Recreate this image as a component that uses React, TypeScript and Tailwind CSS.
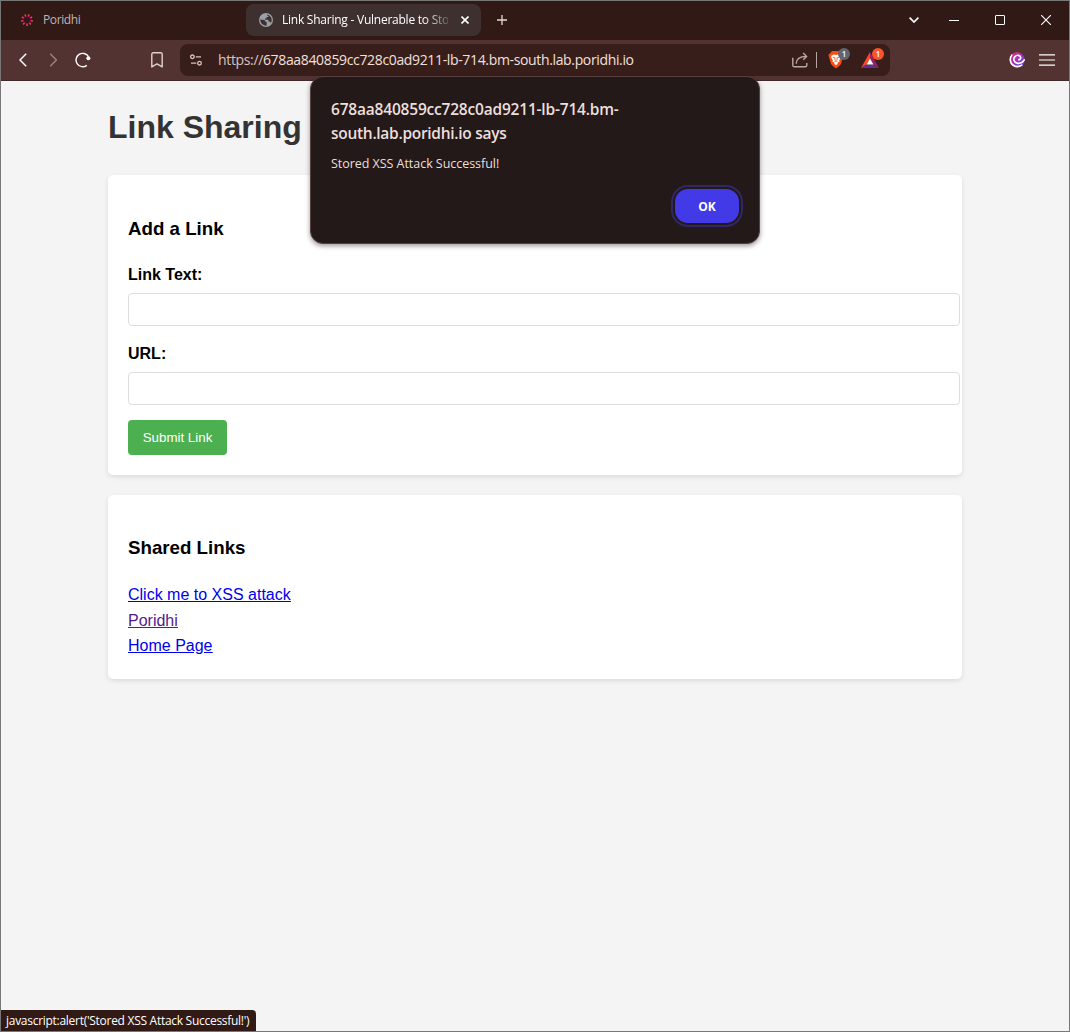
import React from "react";

function PoridhiIcon() {
  const dots = Array.from({ length: 9 }, (_, i) => {
    const a = ((i * 40 + 10) * Math.PI) / 180;
    return { x: Math.cos(a), y: Math.sin(a), i };
  });
  return (
    <svg width="12" height="12" viewBox="0 0 12 12" className="overflow-visible">
      {dots.map((d) => (
        <g key={d.i}>
          <circle cx={6 + d.x * 4.3} cy={6 + d.y * 4.3} r="1.05" fill="#d8146e" />
          <circle cx={6 + d.x * 5.3} cy={6 + d.y * 5.3} r=".75" fill="#f5603c" />
        </g>
      ))}
    </svg>
  );
}

function TabStrip() {
  return (
    <div className="flex h-[39px] shrink-0 items-center bg-[#311a16] pb-px text-[12px]">
      <div className="flex w-[245px] items-center pl-5">
        <PoridhiIcon />
        <span className="ml-[10px] tracking-[-0.4px] text-[#bfb4b1]">Poridhi</span>
      </div>
      <div className="flex h-8 w-[235px] items-center rounded-[8px] bg-[#3d302f] pl-[13px]">
        <svg width="14" height="14" viewBox="0 0 14 14">
          <circle cx="7" cy="7" r="7" fill="#9aa0a6" />
          <path d="M1.3 6.4 5.2 7.1Q6.3 7.4 6.1 8.4L7.7 9v3.4C4.3 12.8 1.2 10 1.3 6.4Z" fill="#3d302f" />
          <path d="M8.2 1.4C10.9 1.9 12.7 4.1 12.7 7c0 1.1-.3 2.1-.8 3l-1-1.4H9.4V6.8H6V5.4h1.5V4.1h2V2.7H8.2Z" fill="#3d302f" />
        </svg>
        <div className="ml-[9px] w-[166px] overflow-hidden whitespace-nowrap text-white [mask-image:linear-gradient(to_right,black_142px,transparent_172px)]">
          <span className="tracking-[-0.24px]">Link Sharing - Vulnerable to Sto</span>
        </div>
        <svg className="ml-[13px]" width="8" height="8" viewBox="0 0 8 8" stroke="#fff" strokeWidth="1.6">
          <path d="M.5.5l7 7m0-7-7 7" />
        </svg>
      </div>
      <svg className="ml-4" width="10" height="10" viewBox="0 0 10 10" stroke="#e5d9d6" strokeWidth="1.3">
        <path d="M5 0v10M0 5h10" />
      </svg>
      <div className="ml-auto flex items-center pr-[18px]">
        <svg className="mr-[30px]" width="10" height="6" viewBox="0 0 10 6" fill="none" stroke="#fff" strokeWidth="1.7">
          <path d="M.6.6 5 5 9.4.6" />
        </svg>
        <div className="mr-9 h-px w-[10px] bg-white" />
        <div className="mr-9 size-[10px] rounded-[1px] border border-white" />
        <svg width="10" height="10" viewBox="0 0 10 10" stroke="#fff" strokeWidth="1.1">
          <path d="M0 0l10 10M10 0 0 10" />
        </svg>
      </div>
    </div>
  );
}

function BraveShield() {
  return (
    <div className="relative ml-[11px] h-[18px] w-4">
      <svg width="16" height="18" viewBox="0 0 16 18">
        <path d="M4 0h8l1.5 1.7L15.6 4l-.7 2L13 13l-2 2.3L8 17.6 5 15.3 3 13 1 6 .4 4 2.5 1.7Z" fill="#fb4c10" />
        <path d="M3.6 4.4 6 3.4l2 .5 2-.5 2.4 1 .5 1.9-1.7 2.9.3 1.5-1.7.9L9.6 13 8 14.2 6.4 13l-.2-1.4-1.7-.9.3-1.5-1.7-2.9Z" fill="#fff" />
        <path d="M4.8 6.4 7 6.8l-.6 1.8M11.2 6.4 9 6.8l.6 1.8M6.5 10.7 8 10.1l1.5.6M8 7.6v2.4" fill="none" stroke="#fb4c10" strokeWidth=".8" />
      </svg>
      <div className="absolute -top-[3px] left-[10px] flex h-3 w-3 items-center justify-center rounded-full bg-[#626471] text-[8px] font-semibold leading-none text-white">1</div>
    </div>
  );
}

function BatTriangle() {
  return (
    <div className="relative ml-[17px] h-4 w-[18px]">
      <svg width="18" height="16" viewBox="0 0 18 16">
        <path d="M9 0 0 16l5.6-3.4L9 6.4Z" fill="#ff4724" />
        <path d="M9 0l9 16-5.6-3.4L9 6.4Z" fill="#9e1f63" />
        <path d="M0 16h18l-5.6-3.4H5.6Z" fill="#662d91" />
        <path d="m9 6.4 3.4 6.2H5.6Z" fill="#fff" />
      </svg>
      <div className="absolute -top-1 left-[11px] flex h-3 w-3 items-center justify-center rounded-full bg-[#fb542b] text-[8px] font-semibold leading-none text-white">1</div>
    </div>
  );
}

function LeoIcon() {
  return (
    <svg width="16" height="16" viewBox="0 0 16 16">
      <defs>
        <linearGradient id="leo" x1="0" y1="0" x2="1" y2="1">
          <stop offset=".1" stopColor="#e02b78" />
          <stop offset=".5" stopColor="#a62ec0" />
          <stop offset="1" stopColor="#4b50e8" />
        </linearGradient>
        <clipPath id="leoClip">
          <circle cx="8" cy="8" r="7.9" />
        </clipPath>
      </defs>
      <g clipPath="url(#leoClip)">
        <circle cx="8" cy="8" r="7.9" fill="url(#leo)" />
        <path
          d="M9 7.6c1.5.4 2.900-.6 2.700-2.200C11.300 3 7.800 2.500 5.900 4.600 3.900 7 4.900 10.400 8 11.100c3.200.7 6.200-1.100 7.900-3.900"
          fill="none" stroke="#fff" strokeWidth="1.7" />
        <path d="M3 2.200C.2 6.400.8 11 4.200 13.300c2.700 1.800 6.300 1.600 9.300-.2" fill="none" stroke="#fff" strokeWidth="1.7" />
      </g>
    </svg>
  );
}

function Toolbar() {
  return (
    <div className="flex h-[41px] shrink-0 items-center border-b border-[#40292a] bg-[#523331] pl-[18px]">
      <svg width="8" height="14" viewBox="0 0 8 14" fill="none" stroke="#fff" strokeWidth="1.5">
        <path d="M7.2.7 1 7l6.2 6.3" />
      </svg>
      <svg className="ml-[22px]" width="8" height="14" viewBox="0 0 8 14" fill="none" stroke="#9a827f" strokeWidth="1.4">
        <path d="M1.2.7 7.4 7l-6.2 6.3" />
      </svg>
      <svg className="ml-[18px]" width="16" height="16" viewBox="0 0 16 16" fill="none" stroke="#fff" strokeWidth="1.4">
        <path d="M11.8 13.4A6.7 6.7 0 1 1 13.5 4.6" />
        <circle cx="13.4" cy="6.2" r="2" fill="#fff" stroke="none" />
      </svg>
      <svg className="ml-[60px]" width="12" height="16" viewBox="0 0 12 16" fill="none" stroke="#e0d1ce" strokeWidth="1.4" strokeLinejoin="round">
        <path d="M2.3.8h7.4Q11.2.8 11.2 2.3V14.9L6 11.9.8 14.9V2.3Q.8.8 2.3.8Z" />
      </svg>
      <div className="ml-[17px] flex h-8 w-[710px] items-center rounded-[8px] bg-[#381e1b] pl-[10px]">
        <svg width="12" height="12" viewBox="0 0 12 12" fill="none" stroke="#d6c3bf" strokeWidth="1.3">
          <circle cx="2.4" cy="2.8" r="1.8" />
          <path d="M5.8 2.8H11M1 9.2h5.3" />
          <circle cx="9.5" cy="9.2" r="1.8" />
        </svg>
        <div className="ml-4 w-[572px] whitespace-nowrap text-[14px] leading-5">
          <span className="tracking-[-0.35px] text-[#f2e0dc]">
            <span className="text-[#d7c4c0]">https://</span>678aa840859cc728c0ad9211-lb-714.bm-south.lab.poridhi.io
          </span>
        </div>
        <svg className="ml-[2px]" width="16" height="16" viewBox="0 0 16 16" fill="none" stroke="#bba9a6" strokeWidth="1.4">
          <path d="M.8 5.7v7.5Q.8 14.8 2.4 14.8h10.8Q14.8 14.8 14.8 13.2V11" />
          <path d="M4.2 11.8C4.3 7.3 7 4.4 14.4 4.4M11.2 1l3.4 3.4-3.4 3.4" />
        </svg>
        <div className="ml-2 h-4 w-px bg-[#b7a7a4]" />
        <BraveShield />
        <BatTriangle />
      </div>
      <div className="ml-auto flex items-center gap-[14px] pr-[14px]">
        <LeoIcon />
        <svg width="16" height="12" viewBox="0 0 16 12" stroke="#fff" strokeWidth="1.2">
          <path d="M0 .8h16M0 6h16M0 11.2h16" />
        </svg>
      </div>
    </div>
  );
}

function AlertDialog() {
  return (
    <div className="absolute left-[309px] top-[75px] flex h-[168px] w-[450px] flex-col rounded-[13px] border border-[#57403f] bg-[#231918] px-5 shadow-[0_2px_5px_rgba(0,0,0,0.4)]">
      <h2 className="mt-5 text-[15.5px] font-semibold leading-6 text-[#ecdfdc]">
        <span className="block whitespace-nowrap tracking-[-0.2px]">678aa840859cc728c0ad9211-lb-714.bm-</span>
        <span className="block whitespace-nowrap tracking-[-0.29px]">south.lab.poridhi.io says</span>
      </h2>
      <p className="mt-[9px] text-[12.5px] leading-5 text-[#ecdfdc]">
        <span className="tracking-[-0.04px]">Stored XSS Attack Successful!</span>
      </p>
      <button className="mt-[15px] h-[34px] w-16 self-end rounded-[13px] bg-[#423ae6] pt-px text-[12px] font-bold text-white outline-2 outline-offset-2 outline-[#302765]">
        OK
      </button>
    </div>
  );
}

const card = "rounded-[5px] bg-white px-5 shadow-[0_2px_5px_rgba(0,0,0,0.1)]";
const field = "block h-[33px] w-[832px] rounded-[4px] border border-[#dddddd] bg-white px-2";

function Page() {
  return (
    <main className="grow bg-[#f4f4f4] px-[107px] font-['Liberation_Sans',Arial,sans-serif] text-[16px] text-black">
      <h1 className="pt-[21px] text-[32px] font-bold leading-[51px] text-[#333]">Link Sharing</h1>
      <section className={card + " mt-[22px] h-[300px] pt-[38px]"}>
        <h3 className="text-[18.72px] font-bold leading-[31px]">Add a Link</h3>
        <label className="mt-[18px] block font-bold leading-[26px]">Link Text:</label>
        <input className={field + " mt-[5px]"} />
        <label className="mt-[15px] block font-bold leading-[26px]">URL:</label>
        <input className={field + " mt-[5px]"} />
        <button className="mt-[15px] block h-[35px] w-[99px] rounded-[4px] bg-[#4caf50] text-[13.33px] text-white">Submit Link</button>
      </section>
      <section className={card + " mt-5 h-[184px] pt-[37px]"}>
        <h3 className="text-[18.72px] font-bold leading-[31px]">Shared Links</h3>
        <div className="mt-[19px] flex flex-col items-start leading-[25.6px] text-[#0000ee] underline">
          <a>Click me to XSS attack</a>
          <a className="text-[#551a8b]">Poridhi</a>
          <a>Home Page</a>
        </div>
      </section>
    </main>
  );
}

export default function App() {
  return (
    <div className="relative flex h-[1032px] w-[1070px] flex-col overflow-hidden border border-[#777777] font-['Open_Sans','Noto_Sans',sans-serif]">
      <TabStrip />
      <Toolbar />
      <Page />
      <AlertDialog />
      <div className="absolute bottom-0 left-0 h-[21px] w-[255px] whitespace-nowrap rounded-tr-[4px] bg-[#311a16] pl-[5px] text-[12px] leading-[22px] text-white">
        <span className="tracking-[-0.28px]">javascript:alert('Stored XSS Attack Successful!')</span>
      </div>
    </div>
  );
}
